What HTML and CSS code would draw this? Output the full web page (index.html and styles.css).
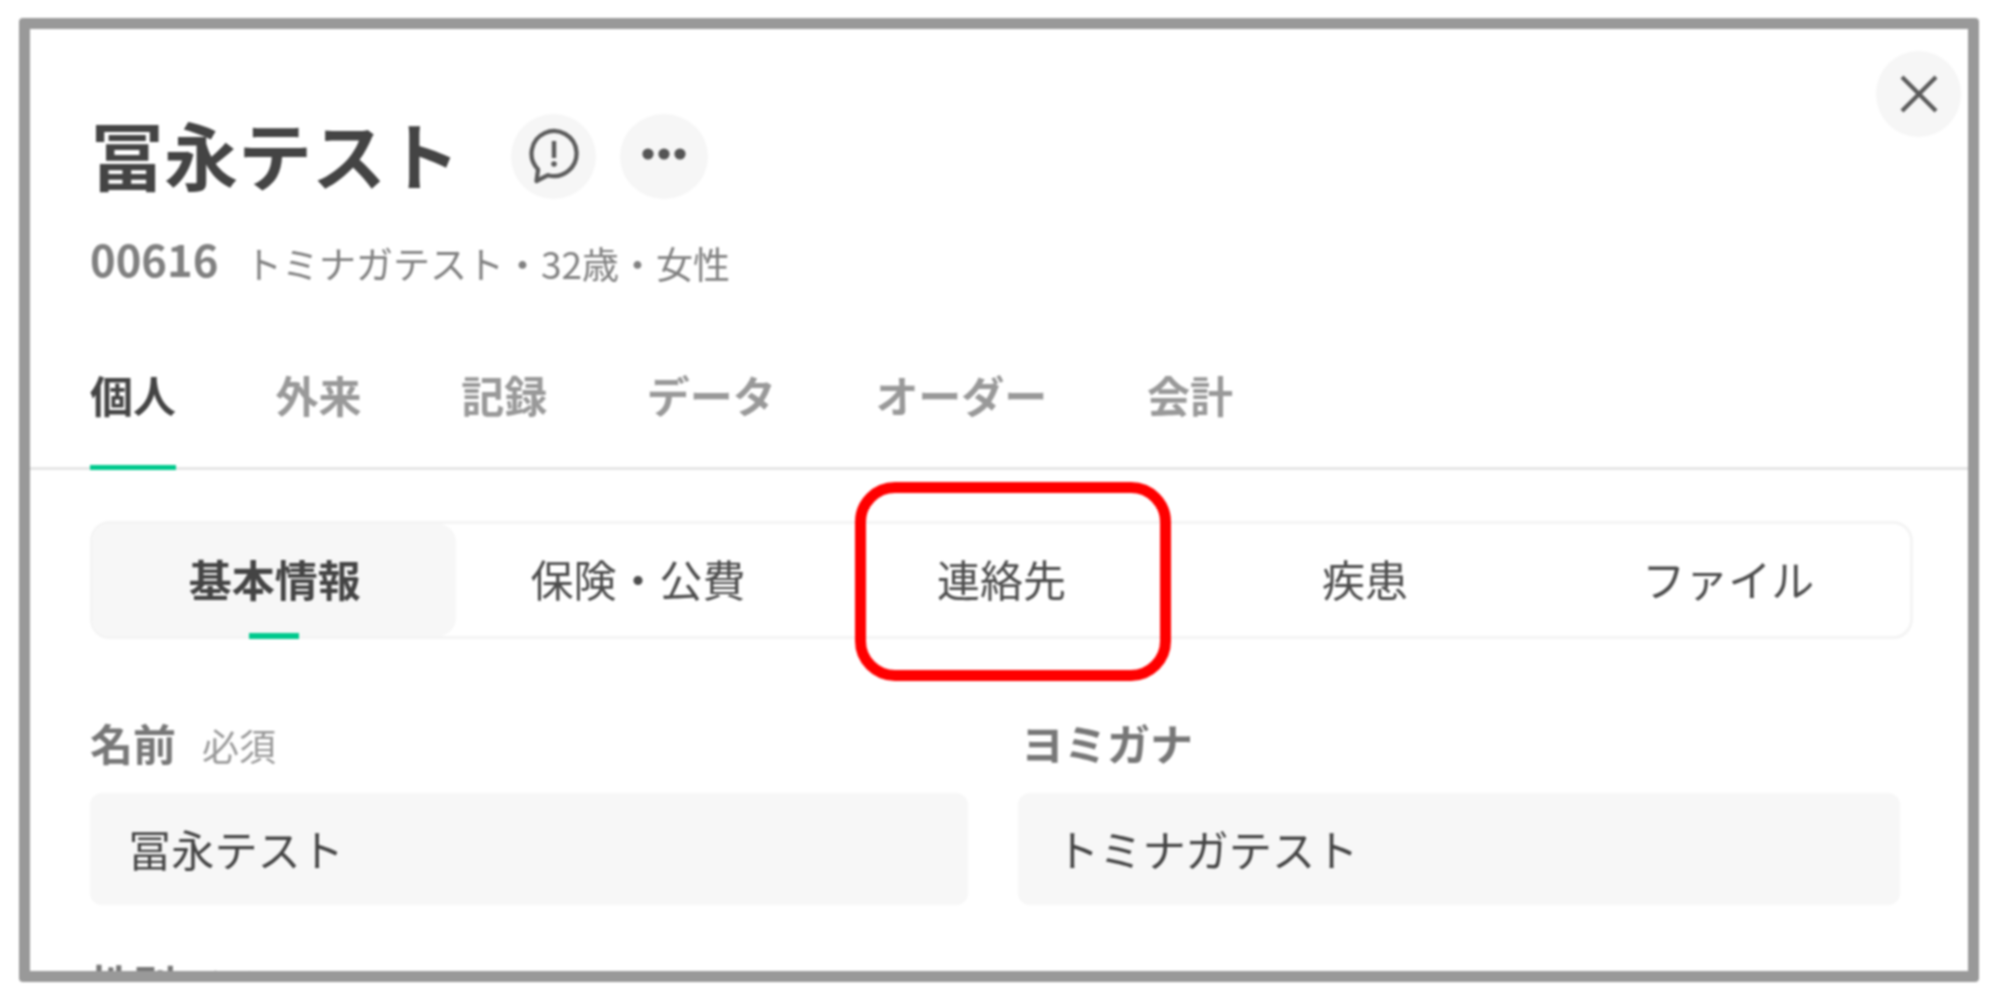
FILE: index.html
```html
<!DOCTYPE html>
<html lang="ja">
<head>
<meta charset="utf-8">
<title>冨永テスト</title>
<link rel="stylesheet" href="styles.css">
</head>
<body>
<div class="frame">
  <button class="round close" aria-label="閉じる">
    <svg width="40" height="38" viewBox="0 0 40 38"><path d="M3 2 L37 36 M37 2 L3 36" fill="none" stroke="#5a5a5a" stroke-width="4.2"/></svg>
  </button>
  <header class="head">
    <div class="title-row">
      <h1 class="title">冨永テスト</h1>
      <button class="round alert" aria-label="メモ">
        <svg width="60" height="60" viewBox="0 0 60 60"><path d="M14.1 43.4 A22.5 22.5 0 1 1 24 49.2 L12.5 55 Z" fill="none" stroke="#5c5c5c" stroke-width="4.2" stroke-linejoin="round"/><path d="M30 15 V32" stroke="#5c5c5c" stroke-width="4.4" fill="none"/><circle cx="30" cy="38" r="2.8" fill="#5c5c5c"/></svg>
      </button>
      <button class="round more" aria-label="その他">
        <svg class="dots" width="48" height="14" viewBox="0 0 48 14"><circle cx="8" cy="7" r="5.6" fill="#555"/><circle cx="24" cy="7" r="5.6" fill="#555"/><circle cx="40" cy="7" r="5.6" fill="#555"/></svg>
      </button>
    </div>
    <div class="sub"><span class="id">00616</span><span class="meta">トミナガテスト・32歳・女性</span></div>
  </header>
  <nav class="tabs">
    <a class="tab active">個人</a>
    <a class="tab">外来</a>
    <a class="tab">記録</a>
    <a class="tab">データ</a>
    <a class="tab">オーダー</a>
    <a class="tab">会計</a>
  </nav>
  <div class="seg">
    <a class="seg-item active">基本情報</a>
    <a class="seg-item">保険・公費</a>
    <a class="seg-item">連絡先</a>
    <a class="seg-item">疾患</a>
    <a class="seg-item">ファイル</a>
  </div>
  <div class="form">
    <div class="field">
      <div class="label">名前<span class="req">必須</span></div>
      <div class="input">冨永テスト</div>
    </div>
    <div class="field">
      <div class="label label-kana">ヨミガナ</div>
      <div class="input">トミナガテスト</div>
    </div>
    <div class="field">
      <div class="label">性別<span class="req">必須</span></div>
    </div>
  </div>
  <div class="highlight"></div>
</div>
</body>
</html>
```
FILE: styles.css
```css
* { box-sizing: border-box; }
html, body { margin: 0; height: 100%; background: #fff; overflow: hidden; }
body {
  padding: 18px 21px 0 19px;
  font-family: "Noto Sans CJK JP", "Noto Sans", sans-serif;
  color: #444;
}
.frame {
  position: relative;
  height: 964px;
  border: 11px solid #999;
  border-radius: 4px;
  overflow: hidden;
  background: #fff;
  filter: blur(0.8px);
}
.round {
  display: flex;
  align-items: center;
  justify-content: center;
  padding: 0;
  border: 0;
  border-radius: 50%;
  background: #f6f6f6;
}
.close {
  position: absolute;
  top: 22px;
  right: 7px;
  width: 85px;
  height: 86px;
}
.head { padding: 84px 0 0 60px; }
.title-row { display: flex; align-items: center; height: 86px; }
.title {
  align-self: flex-start;
  margin: 0 51px 0 0;
  font-size: 74px;
  line-height: 79px;
  font-weight: 700;
  color: #444;
}
.alert { width: 85px; height: 85px; }
.more { width: 88px; height: 85px; margin-left: 24px; }
.dots { margin-bottom: 5px; }
.sub { display: flex; align-items: flex-start; margin-top: 39px; height: 50px; color: #808080; }
.id { font-size: 43.5px; font-weight: 700; line-height: 42px; width: 155px; }
.meta { font-size: 37px; line-height: 50px; }
.tabs {
  display: flex;
  gap: 99.6px;
  margin-top: 76px;
  padding-left: 60px;
  border-bottom: 3px solid #e6e6e6;
}
.tab {
  display: block;
  font-size: 43px;
  line-height: 60px;
  font-weight: 700;
  color: #999;
  padding-bottom: 41px;
  margin-bottom: -3px;
  border-bottom: 5px solid transparent;
}
.tab.active { color: #444; border-bottom-color: #00c98d; }
.seg {
  display: grid;
  grid-template-columns: repeat(5, 1fr);
  height: 118px;
  margin: 51px 55px 0 60px;
  border: 3px solid #f4f4f4;
  border-radius: 20px;
}
.seg-item {
  position: relative;
  display: flex;
  align-items: center;
  justify-content: center;
  padding-bottom: 5px;
  font-size: 43px;
  color: #4c4c4c;
}
.seg-item.active {
  font-weight: 700;
  color: #444;
  background: #f7f7f7;
  border-radius: 18px;
}
.seg-item.active::after {
  content: "";
  position: absolute;
  left: 50%;
  bottom: -3px;
  width: 50px;
  height: 6px;
  margin-left: -26px;
  background: #00c98d;
}
.form {
  display: grid;
  grid-template-columns: 878px 882px;
  column-gap: 50px;
  row-gap: 48px;
  margin: 73px 0 0 60px;
}
.label {
  height: 60px;
  font-size: 43px;
  line-height: 60px;
  font-weight: 700;
  color: #777;
}
.label-kana { padding-left: 3px; }
.req { margin-left: 26px; font-size: 37px; line-height: 1; font-weight: 400; color: #999; }
.input {
  display: flex;
  align-items: center;
  height: 112px;
  margin-top: 21px;
  padding: 0 0 3px 38px;
  font-size: 43.2px;
  color: #444;
  background: #f7f7f7;
  border-radius: 12px;
}
.highlight {
  position: absolute;
  left: 825px;
  top: 453px;
  width: 316px;
  height: 199px;
  border: 11px solid #f00;
  border-radius: 40px;
}
```
